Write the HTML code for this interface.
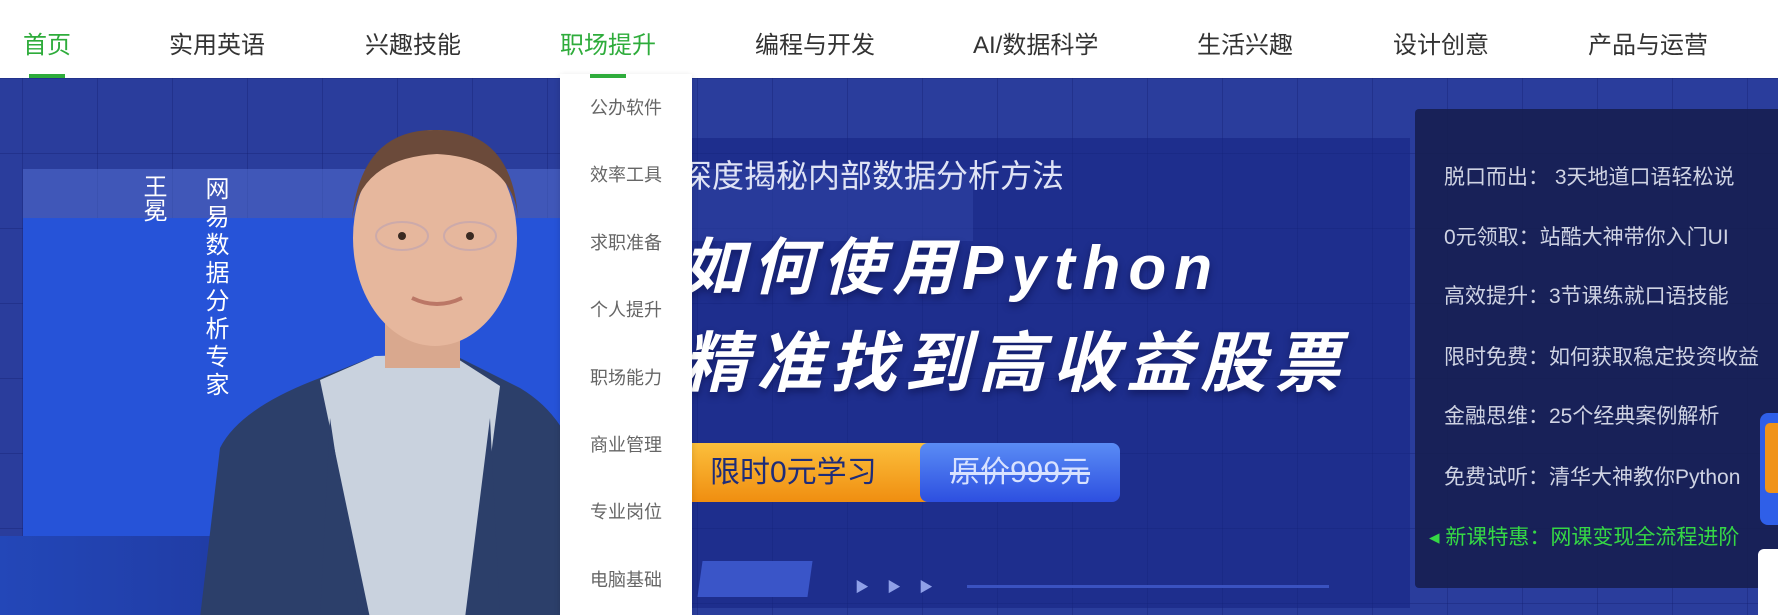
<!DOCTYPE html>
<html><head><meta charset="utf-8">
<style>
*{margin:0;padding:0;box-sizing:border-box}
body{width:1778px;height:615px;overflow:hidden;background:#fff;font-family:"Liberation Sans","Noto Sans CJK SC",sans-serif;position:relative}
.nav{position:absolute;left:0;top:0;width:1778px;height:78px;background:#fff}
.nav span{position:absolute;top:30px;font-size:24px;line-height:32px;color:#333;white-space:nowrap}
.nav .on{color:#2eac3b}
.ul{position:absolute;height:4px;background:#2eac3b;top:74px}
.banner{position:absolute;left:0;top:78px;width:1778px;height:537px;background:#2a3d9c;overflow:hidden;
background-image:linear-gradient(rgba(20,30,110,.35) 1px,transparent 1px),linear-gradient(90deg,rgba(20,30,110,.35) 1px,transparent 1px);
background-size:75px 75px;background-position:22px 0}
.abs{position:absolute}
.panel{position:absolute;left:1415px;top:31px;width:380px;height:479px;background:rgba(22,30,78,.88);border-radius:4px}
.panel div{position:absolute;left:29px;font-size:21px;color:#cfd3e3;white-space:nowrap;line-height:28px}
.dd{position:absolute;left:560px;top:74px;width:132px;height:541px;background:#fff;box-shadow:0 2px 6px rgba(0,0,0,.15)}
.dd div{position:absolute;left:0;width:132px;text-align:center;font-size:18px;color:#666;line-height:24px}
.vt{position:absolute;writing-mode:vertical-rl;color:#fff;font-size:24px;line-height:26px}
.hl{position:absolute;font-weight:bold;font-style:italic;color:#fff;white-space:nowrap;line-height:1;text-shadow:0 4px 8px rgba(0,0,40,.4)}
</style></head><body>
<div class="nav">
<span class="on" style="left:23px">首页</span>
<span style="left:169px">实用英语</span>
<span style="left:365px">兴趣技能</span>
<span class="on" style="left:560px">职场提升</span>
<span style="left:755px">编程与开发</span>
<span style="left:973px">AI/数据科学</span>
<span style="left:1197px">生活兴趣</span>
<span style="left:1393px">设计创意</span>
<span style="left:1588px">产品与运营</span>
</div>
<div class="ul" style="left:29px;width:36px"></div>
<div class="banner">
 <div class="abs" style="left:23px;top:91px;width:950px;height:72px;background:rgba(90,120,220,.45)"></div>
 <div class="abs" style="left:23px;top:140px;width:540px;height:323px;background:#2653d8"></div>
 <div class="abs" style="left:0;top:458px;width:560px;height:79px;background:linear-gradient(90deg,#2347b8,#1c2c88)"></div>
 <div class="abs" style="left:690px;top:60px;width:720px;height:470px;background:rgba(20,35,130,.55)"></div>
 <div class="vt" style="left:139px;top:96px">王冕</div>
 <div class="vt" style="left:201px;top:98px;letter-spacing:4px">网易数据分析专家</div>
 <svg class="abs" style="left:200px;top:40px" width="380" height="500" viewBox="0 0 380 500">
  <path d="M0 500 L20 330 Q40 290 120 260 L170 240 L250 235 L320 270 Q370 300 380 360 L380 500 Z" fill="#2c3f6a"/>
  <path d="M120 262 L175 238 L250 236 L300 268 L270 500 L170 500 Z" fill="#c9d2de"/>
  <path d="M130 300 L160 500 L120 500 Z M290 300 L265 500 L300 500 Z" fill="#2c3f6a"/>
  <rect x="185" y="170" width="75" height="80" fill="#d9a88e"/>
  <ellipse cx="235" cy="120" rx="82" ry="108" fill="#e6b79d"/>
  <path d="M152 100 Q162 10 237 12 Q312 12 318 100 Q312 40 237 36 Q162 40 152 100Z" fill="#6b4a3a"/>
  <ellipse cx="202" cy="118" rx="26" ry="14" fill="none" stroke="#caa" stroke-width="2"/>
  <ellipse cx="270" cy="118" rx="26" ry="14" fill="none" stroke="#caa" stroke-width="2"/>
  <circle cx="202" cy="118" r="4" fill="#3a2a22"/><circle cx="270" cy="118" r="4" fill="#3a2a22"/>
  <path d="M212 180 Q237 192 262 180" stroke="#b76" stroke-width="4" fill="none"/>
 </svg>
 <div class="abs" style="left:680px;top:78px;font-size:32px;line-height:40px;color:#dfe3f5;white-space:nowrap">深度揭秘内部数据分析方法</div>
 <div class="hl" style="left:682px;top:160px;font-size:62px;letter-spacing:8px">如何使用Python</div>
 <div class="hl" style="left:682px;top:252px;font-size:66px;letter-spacing:8px">精准找到高收益股票</div>
 <div class="abs" style="left:640px;top:365px;width:300px;height:59px;border-radius:8px;background:linear-gradient(#fbbf3c,#f08e10);font-size:30px;color:#1d2c7a;line-height:59px;padding-left:70px">限时0元学习</div>
 <div class="abs" style="left:920px;top:365px;width:200px;height:59px;border-radius:8px;background:linear-gradient(#5a8cf5,#2d4fe0);font-size:30px;color:#d8e2ff;line-height:59px;text-align:center;text-decoration:line-through">原价999元</div>
 <div class="abs" style="left:700px;top:483px;width:110px;height:36px;background:#3a55c8;transform:skewX(-8deg)"></div>
 <div class="abs" style="left:855px;top:499px;color:#8fa0e8;font-size:14px;letter-spacing:18px">▶▶▶</div>
 <div class="abs" style="left:967px;top:507px;width:362px;height:3px;background:#3a52c0"></div>
 <div class="panel">
  <div style="top:55px">脱口而出：&nbsp;3天地道口语轻松说</div>
  <div style="top:115px">0元领取：站酷大神带你入门UI</div>
  <div style="top:174px">高效提升：3节课练就口语技能</div>
  <div style="top:235px">限时免费：如何获取稳定投资收益</div>
  <div style="top:294px">金融思维：25个经典案例解析</div>
  <div style="top:355px">免费试听：清华大神教你Python</div>
  <div style="top:415px;color:#35d845;left:14px">◂ 新课特惠：网课变现全流程进阶</div>
 </div>
 <div class="abs" style="left:1760px;top:335px;width:30px;height:112px;border-radius:8px;background:#2f5fe8"></div>
 <div class="abs" style="left:1765px;top:345px;width:20px;height:70px;border-radius:5px;background:#f0931a"></div>
 <div class="abs" style="left:1758px;top:471px;width:30px;height:70px;border-radius:6px 0 0 0;background:#fff"></div>
</div>
<div class="dd">
 <div style="top:22px">公办软件</div>
 <div style="top:89px">效率工具</div>
 <div style="top:157px">求职准备</div>
 <div style="top:224px">个人提升</div>
 <div style="top:292px">职场能力</div>
 <div style="top:359px">商业管理</div>
 <div style="top:426px">专业岗位</div>
 <div style="top:494px">电脑基础</div>
</div>
<div class="ul" style="left:590px;width:36px"></div>
</body></html>
